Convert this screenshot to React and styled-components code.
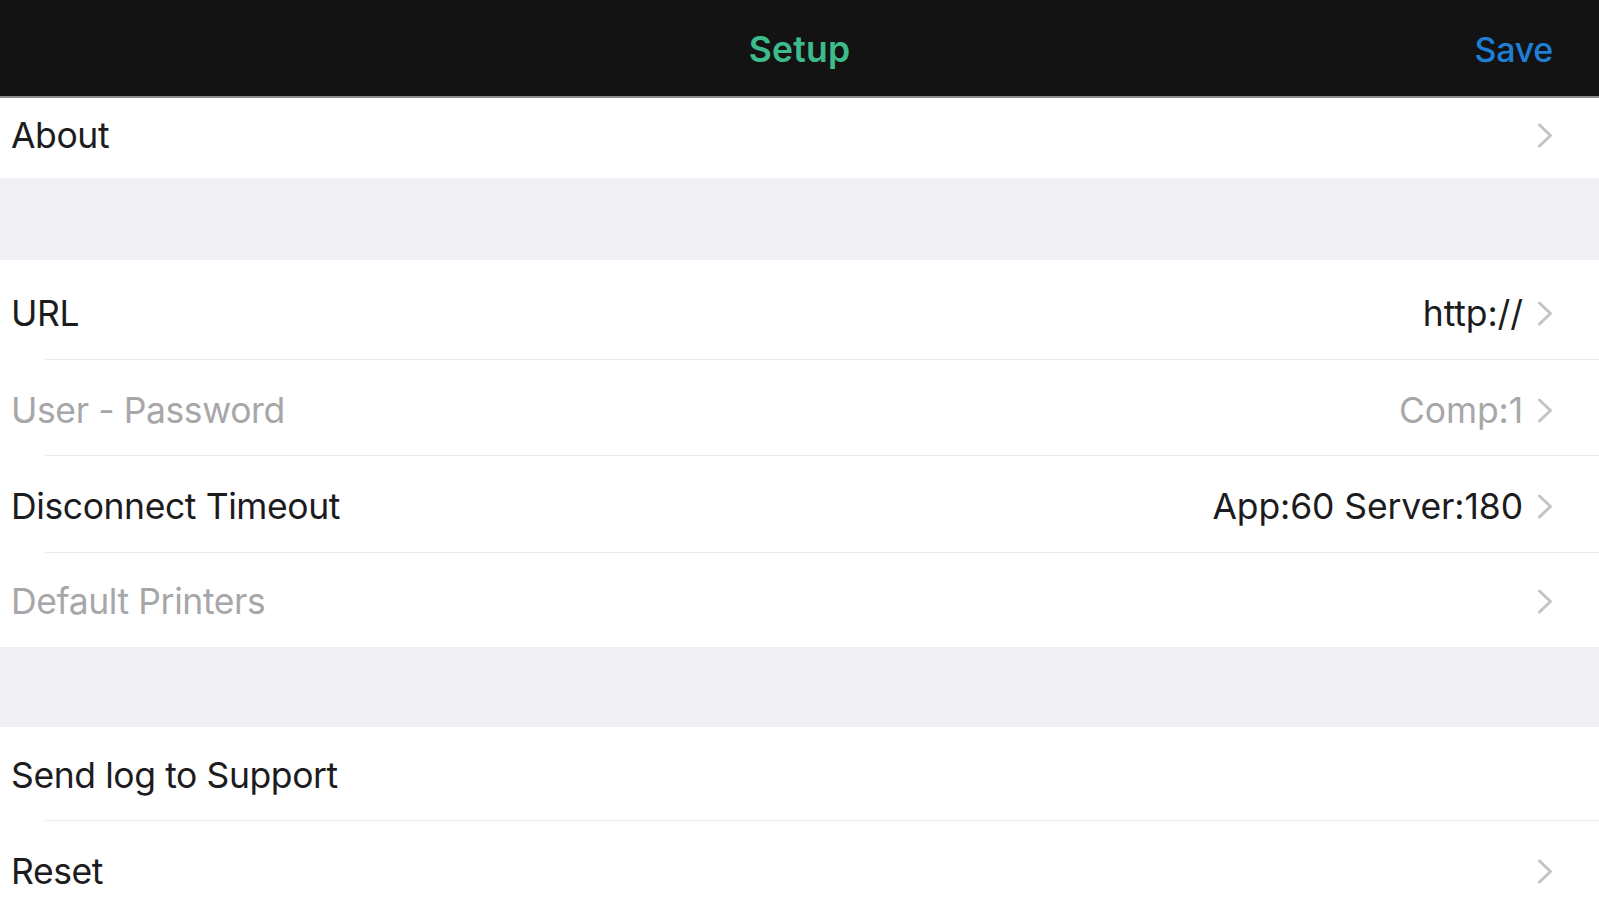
import React from "react";
import styled, { createGlobalStyle } from "styled-components";

const GlobalStyle = createGlobalStyle`
  html, body {
    margin: 0;
    padding: 0;
    background: #ffffff;
    font-family: Inter, "Noto Sans", "Liberation Sans", sans-serif;
    -webkit-font-smoothing: antialiased;
  }
  * { box-sizing: border-box; }
`;

const Page = styled.div`
  display: flex;
  flex-direction: column;
  width: 100%;
`;

const NavBar = styled.header`
  height: 98px;
  background: #131313;
  border-bottom: 2px solid #8c8c8c;
  box-shadow: 0 1px 1px rgba(0, 0, 0, 0.12);
  display: grid;
  grid-template-columns: 1fr auto 1fr;
  align-items: center;
  padding: 2px 46px 0 46px;
`;

const Title = styled.h1`
  grid-column: 2;
  margin: 0;
  font-size: 35.5px;
  font-weight: 600;
  color: #3dbb8b;
  letter-spacing: 0.2px;
`;

const NavButton = styled.button`
  grid-column: 3;
  justify-self: end;
  background: none;
  border: none;
  padding: 0;
  font-family: inherit;
  font-size: 34px;
  font-weight: 500;
  color: #1f7fd6;
  letter-spacing: -0.3px;
  cursor: pointer;
`;

const Group = styled.section`
  display: flex;
  flex-direction: column;
  background: #ffffff;
`;

const Gap = styled.div`
  height: ${(p) => p.$h}px;
  background: #efeff4;
`;

const Row = styled.div`
  height: ${(p) => p.$h || 96}px;
  display: flex;
  align-items: center;
  padding: ${(p) => p.$pt || 0}px 46px ${(p) => p.$pb || 0}px 11px;
  background: #ffffff;
`;

const Label = styled.span`
  flex: 1;
  font-size: 35.5px;
  font-weight: 400;
  letter-spacing: -0.4px;
  color: ${(p) => (p.$muted ? "#a7a7a9" : "#1c1c1e")};
`;

const Value = styled.span`
  font-size: 35.5px;
  font-weight: 400;
  letter-spacing: -0.1px;
  color: ${(p) => (p.$muted ? "#a7a7a9" : "#1c1c1e")};
  margin-right: 14px;
`;

const ChevronBox = styled.span`
  display: flex;
  width: 16px;
  height: 25px;
`;

const Separator = styled.div`
  height: 1px;
  margin-left: 45px;
  background: #e9e9eb;
`;

const Chevron = () => (
  <ChevronBox>
    <svg width="16" height="25" viewBox="0 0 16 25" fill="none">
      <polyline
        points="2.5,2 13.5,12.5 2.5,23"
        stroke="#c4c4c8"
        strokeWidth="3"
        strokeLinecap="round"
        strokeLinejoin="round"
      />
    </svg>
  </ChevronBox>
);

const Item = ({ label, value, muted, valueMuted, chevron = true, h, pt, pb }) => (
  <Row $h={h} $pt={pt} $pb={pb}>
    <Label $muted={muted}>{label}</Label>
    {value && <Value $muted={valueMuted}>{value}</Value>}
    {chevron && <Chevron />}
  </Row>
);

export default function App() {
  return (
    <Page>
      <GlobalStyle />
      <NavBar>
        <Title>Setup</Title>
        <NavButton>Save</NavButton>
      </NavBar>
      <Group>
        <Item label="About" h={80} pb={6} />
      </Group>
      <Gap $h={82} />
      <Group>
        <Item label="URL" value="http://" h={99} pt={8} />
        <Separator />
        <Item label="User - Password" value="Comp:1" muted valueMuted h={95} pt={5} />
        <Separator />
        <Item label="Disconnect Timeout" value="App:60 Server:180" h={96} pt={4} />
        <Separator />
        <Item label="Default Printers" muted h={94} pt={2} />
      </Group>
      <Gap $h={80} />
      <Group>
        <Item label="Send log to Support" chevron={false} h={93} pt={3} />
        <Separator />
        <Item label="Reset" h={96} pt={4} />
      </Group>
    </Page>
  );
}
